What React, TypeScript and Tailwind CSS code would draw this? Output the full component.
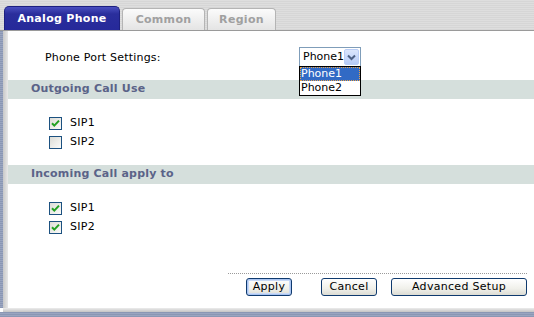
// Analog Phone — eski tip router yönetim paneli sekmesi

const font = "font-['DejaVu_Sans',Verdana,sans-serif]";

function Tab({ label, active }: { label: string; active?: boolean }) {
  if (active) {
    return (
      <div className="h-[24px] w-[116px] rounded-t-[5px] border border-b-0 border-[#1d2080] bg-[linear-gradient(#4a4fc0,#2a2e9c_30%,#26299a)] pt-[4px] text-[11px] font-bold text-white text-center whitespace-nowrap tracking-[0.3px]">
        {label}
      </div>
    );
  }
  return (
    <div className="h-[22px] rounded-t-[4px] border border-b-0 border-[#b4b4b4] bg-[linear-gradient(#fbfbfb,#e4e4e4)] pt-[3px] text-[11px] font-bold text-[#a0a0a0] text-center whitespace-nowrap tracking-[0.3px]">
      {label}
    </div>
  );
}

function Check({ checked }: { checked?: boolean }) {
  return (
    <div className="size-[13px] border border-[#1c5180] bg-[linear-gradient(135deg,#dcdcd6,#fbfbf9)] flex items-center justify-center">
      {checked && (
        <svg width="9" height="9" viewBox="0 0 9 9">
          <path d="M1 4.2 L3.3 6.6 L8 1.6" fill="none" stroke="#21a121" strokeWidth="2" />
        </svg>
      )}
    </div>
  );
}

function SipRow({ label, checked }: { label: string; checked?: boolean }) {
  return (
    <div className="flex items-center h-[19px] pl-[41px]">
      <Check checked={checked} />
      <span className="ml-[8px] text-[11px] text-black tracking-[0.3px]">{label}</span>
    </div>
  );
}

function SectionHead({ title }: { title: string }) {
  return (
    <div className="h-[19px] bg-[#d5dfdc] pl-[23px] flex items-center text-[11px] font-bold text-[#5b6388] tracking-[0.2px]">
      {title}
    </div>
  );
}

function Btn({ label, w, primary }: { label: string; w: string; primary?: boolean }) {
  return (
    <div
      className={`${w} h-[18px] rounded-[3px] border border-[#0f3a6e] bg-[linear-gradient(#ffffff,#f0f0ea_60%,#dcdcd4)] flex items-center justify-center text-[11px] text-black tracking-[0.3px] ${
        primary ? "shadow-[inset_0_0_0_1px_#a9c4f2,inset_0_0_0_2px_#c8d9f6]" : ""
      }`}
    >
      {label}
    </div>
  );
}

export default function App() {
  return (
    <div className={`${font} w-[534px] h-[317px] overflow-hidden flex flex-col bg-white`}>
      {/* sekme şeridi */}
      <div className="h-[31px] shrink-0 border-b border-[#9a9a9a] bg-[repeating-linear-gradient(#dedede_0px,#dedede_1px,#d6d6d6_1px,#d6d6d6_2px)] flex items-end pl-[4px] gap-[2px]">
        <Tab label="Analog Phone" active />
        <div className="w-[83px]">
          <Tab label="Common" />
        </div>
        <div className="w-[69px]">
          <Tab label="Region" />
        </div>
      </div>

      <div className="flex flex-1">
        {/* sol kenar */}
        <div className="w-[3px] bg-[repeating-linear-gradient(#8a97b4_0px,#8a97b4_1px,#9aa5c0_1px,#9aa5c0_2px)]" />
        <div className="w-[5px] bg-[linear-gradient(90deg,#c8c8c8,#e8e8e8)]" />

        <div className="flex-1 flex flex-col">
          {/* port seçimi */}
          <div className="h-[49px] relative">
            <div className="absolute left-[37px] top-[19px] text-[11px] text-black tracking-[0.2px]">
              Phone Port Settings:
            </div>
            <div className="absolute left-[291px] top-[16px] w-[62px] h-[20px] border border-[#7f9db9] bg-white flex items-center">
              <span className="pl-[3px] text-[11px] text-black flex-1">Phone1</span>
              <div className="w-[15px] h-[16px] mr-[1px] rounded-[2px] bg-[linear-gradient(#dbe6fd,#b6cbf7)] border border-[#b9cdf6] flex items-center justify-center">
                <svg width="9" height="7" viewBox="0 0 9 7">
                  <path d="M1 1.5 L4.5 5 L8 1.5" fill="none" stroke="#4d6185" strokeWidth="2" />
                </svg>
              </div>
            </div>
            {/* açık liste */}
            <div className="absolute left-[291px] top-[35px] w-[62px] border border-black bg-white z-10 text-[11px] leading-[14px]">
              <div className="bg-[#316ac5] text-white pl-[1px] outline-1 outline-dotted outline-[#e8a34a] -outline-offset-1">
                Phone1
              </div>
              <div className="text-black pl-[1px]">Phone2</div>
            </div>
          </div>

          <SectionHead title="Outgoing Call Use" />
          <div className="pt-[15px] pb-[13px]">
            <SipRow label="SIP1" checked />
            <SipRow label="SIP2" />
          </div>

          <SectionHead title="Incoming Call apply to" />
          <div className="pt-[15px]">
            <SipRow label="SIP1" checked />
            <SipRow label="SIP2" checked />
          </div>

          {/* alt düğmeler */}
          <div className="mt-[36px] ml-[220px] mr-[7px] border-t border-dotted border-[#9a9a9a]" />
          <div className="flex mt-[4px] pl-[238px] gap-[29px]">
            <Btn label="Apply" w="w-[46px]" primary />
            <div className="flex gap-[14px]">
              <Btn label="Cancel" w="w-[56px]" />
              <Btn label="Advanced Setup" w="w-[136px]" />
            </div>
          </div>
          <div className="flex-1" />
        </div>
      </div>

      {/* alt kenar */}
      <div className="h-[4px] shrink-0 bg-[linear-gradient(#ececec,#c4c4c4)] ml-[3px]" />
      <div className="h-[5px] shrink-0 bg-[repeating-linear-gradient(#8a97b4_0px,#8a97b4_1px,#9aa5c0_1px,#9aa5c0_2px)]" />
    </div>
  );
}
